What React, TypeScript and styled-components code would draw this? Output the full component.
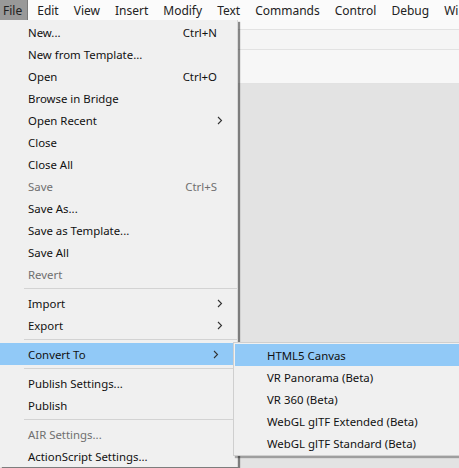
import * as React from 'react'
import styled, { createGlobalStyle } from 'styled-components'

const GlobalStyle = createGlobalStyle`
    html, body {
        margin: 0;
        padding: 0;
        background: #e3e3e3;
    }
    body {
        font-family: "Noto Sans", "Open Sans", sans-serif;
        font-size: 11.4px;
        color: #111;
    }
`

type MenuEntry =
    | { kind: 'item'; label: string; shortcut?: string; disabled?: boolean; submenu?: boolean; active?: boolean }
    | { kind: 'sep' }

const fileMenu: Array<MenuEntry> = [
    { kind: 'item', label: 'New...', shortcut: 'Ctrl+N' },
    { kind: 'item', label: 'New from Template...' },
    { kind: 'item', label: 'Open', shortcut: 'Ctrl+O' },
    { kind: 'item', label: 'Browse in Bridge' },
    { kind: 'item', label: 'Open Recent', submenu: true },
    { kind: 'item', label: 'Close' },
    { kind: 'item', label: 'Close All' },
    { kind: 'item', label: 'Save', shortcut: 'Ctrl+S', disabled: true },
    { kind: 'item', label: 'Save As...' },
    { kind: 'item', label: 'Save as Template...' },
    { kind: 'item', label: 'Save All' },
    { kind: 'item', label: 'Revert', disabled: true },
    { kind: 'sep' },
    { kind: 'item', label: 'Import', submenu: true },
    { kind: 'item', label: 'Export', submenu: true },
    { kind: 'sep' },
    { kind: 'item', label: 'Convert To', submenu: true, active: true },
    { kind: 'sep' },
    { kind: 'item', label: 'Publish Settings...' },
    { kind: 'item', label: 'Publish' },
    { kind: 'sep' },
    { kind: 'item', label: 'AIR Settings...', disabled: true },
    { kind: 'item', label: 'ActionScript Settings...' }
]

const convertMenu = [
    'HTML5 Canvas',
    'VR Panorama (Beta)',
    'VR 360 (Beta)',
    'WebGL glTF Extended (Beta)',
    'WebGL glTF Standard (Beta)'
]

const menuBarItems = ['File', 'Edit', 'View', 'Insert', 'Modify', 'Text', 'Commands', 'Control', 'Debug', 'Window']

const Screen = styled.div`
    position: relative;
    width: 459px;
    height: 468px;
    overflow: hidden;
    background: #e3e3e3;
`

const MenuBar = styled.div`
    display: flex;
    height: 20px;
    background: #fbfbfb;
    white-space: nowrap;
`

const MenuBarItem = styled.div<{ $open?: boolean }>`
    display: flex;
    align-items: center;
    height: 20px;
    padding: 0 ${p => (p.$open ? '5px 0 3px' : '7px 0 7px')};
    box-sizing: border-box;
    font-size: 12px;
    color: #222;
    background: ${p => (p.$open ? '#999999' : 'transparent')};
    border-right: 1px solid ${p => (p.$open ? '#7a7a7a' : 'transparent')};
    margin-right: ${p => (p.$open ? '2px' : '0')};
`

const ToolStrip = styled.div<{ $h: number; $bg: string }>`
    height: ${p => p.$h}px;
    background: ${p => p.$bg};
    border-bottom: 1px solid #e2e2e2;
`

const Menu = styled.div`
    position: absolute;
    left: 0;
    top: 20px;
    width: 237px;
    background: #f0f0f0;
    border-right: 1px solid #d9d9d9;
    padding-top: 1px;
    box-shadow: 2px 2px 1px rgba(0, 0, 0, 0.45);
`

const SubMenu = styled.div`
    position: absolute;
    left: 233px;
    top: 342px;
    width: 240px;
    background: #f0f0f0;
    border: 1px solid #cfcfcf;
    padding: 1px 0 1px 1px;
    box-shadow: 2px 2px 1px rgba(0, 0, 0, 0.3);
`

const Item = styled.div<{ $disabled?: boolean; $active?: boolean; $indent: number }>`
    display: flex;
    align-items: center;
    height: 22px;
    padding-left: ${p => p.$indent}px;
    color: ${p => (p.$disabled ? '#6f6f6f' : '#111')};
    background: ${p => (p.$active ? '#91c9f7' : 'transparent')};
    margin-right: ${p => (p.$active ? '4px' : '0')};
    white-space: nowrap;
`

const Label = styled.span`
    flex: 1;
`

const Shortcut = styled.span`
    margin-right: 20px;
`

const ArrowSlot = styled.span`
    width: 14px;
    margin-right: 6px;
    display: flex;
    align-items: center;
`

const Separator = styled.div`
    height: 1px;
    margin: 3px 0 3px 24px;
    background: #d3d3d3;
`

const Chevron = () => (
    <svg width="6" height="9" viewBox="0 0 6 9">
        <polyline points="1,1 4.5,4.5 1,8" fill="none" stroke="#333" strokeWidth="1.1" />
    </svg>
)

export default function App() {
    return (
        <Screen>
            <GlobalStyle />
            <MenuBar>
                {menuBarItems.map((m, i) => (
                    <MenuBarItem key={m} $open={i === 0}>{m}</MenuBarItem>
                ))}
            </MenuBar>
            <ToolStrip $h={9} $bg="#f9f9f9" />
            <ToolStrip $h={19} $bg="#f5f5f5" />
            <ToolStrip $h={33} $bg="#f7f7f7" />
            <Menu>
                {fileMenu.map((e, i) =>
                    e.kind === 'sep' ? (
                        <Separator key={i} />
                    ) : (
                        <Item key={i} $indent={28} $disabled={e.disabled} $active={e.active}>
                            <Label>{e.label}</Label>
                            {e.shortcut && <Shortcut>{e.shortcut}</Shortcut>}
                            {e.submenu && <ArrowSlot><Chevron /></ArrowSlot>}
                        </Item>
                    )
                )}
            </Menu>
            <SubMenu>
                {convertMenu.map((label, i) => (
                    <Item key={label} $indent={32} $active={i === 0}>
                        <Label>{label}</Label>
                    </Item>
                ))}
            </SubMenu>
        </Screen>
    )
}
